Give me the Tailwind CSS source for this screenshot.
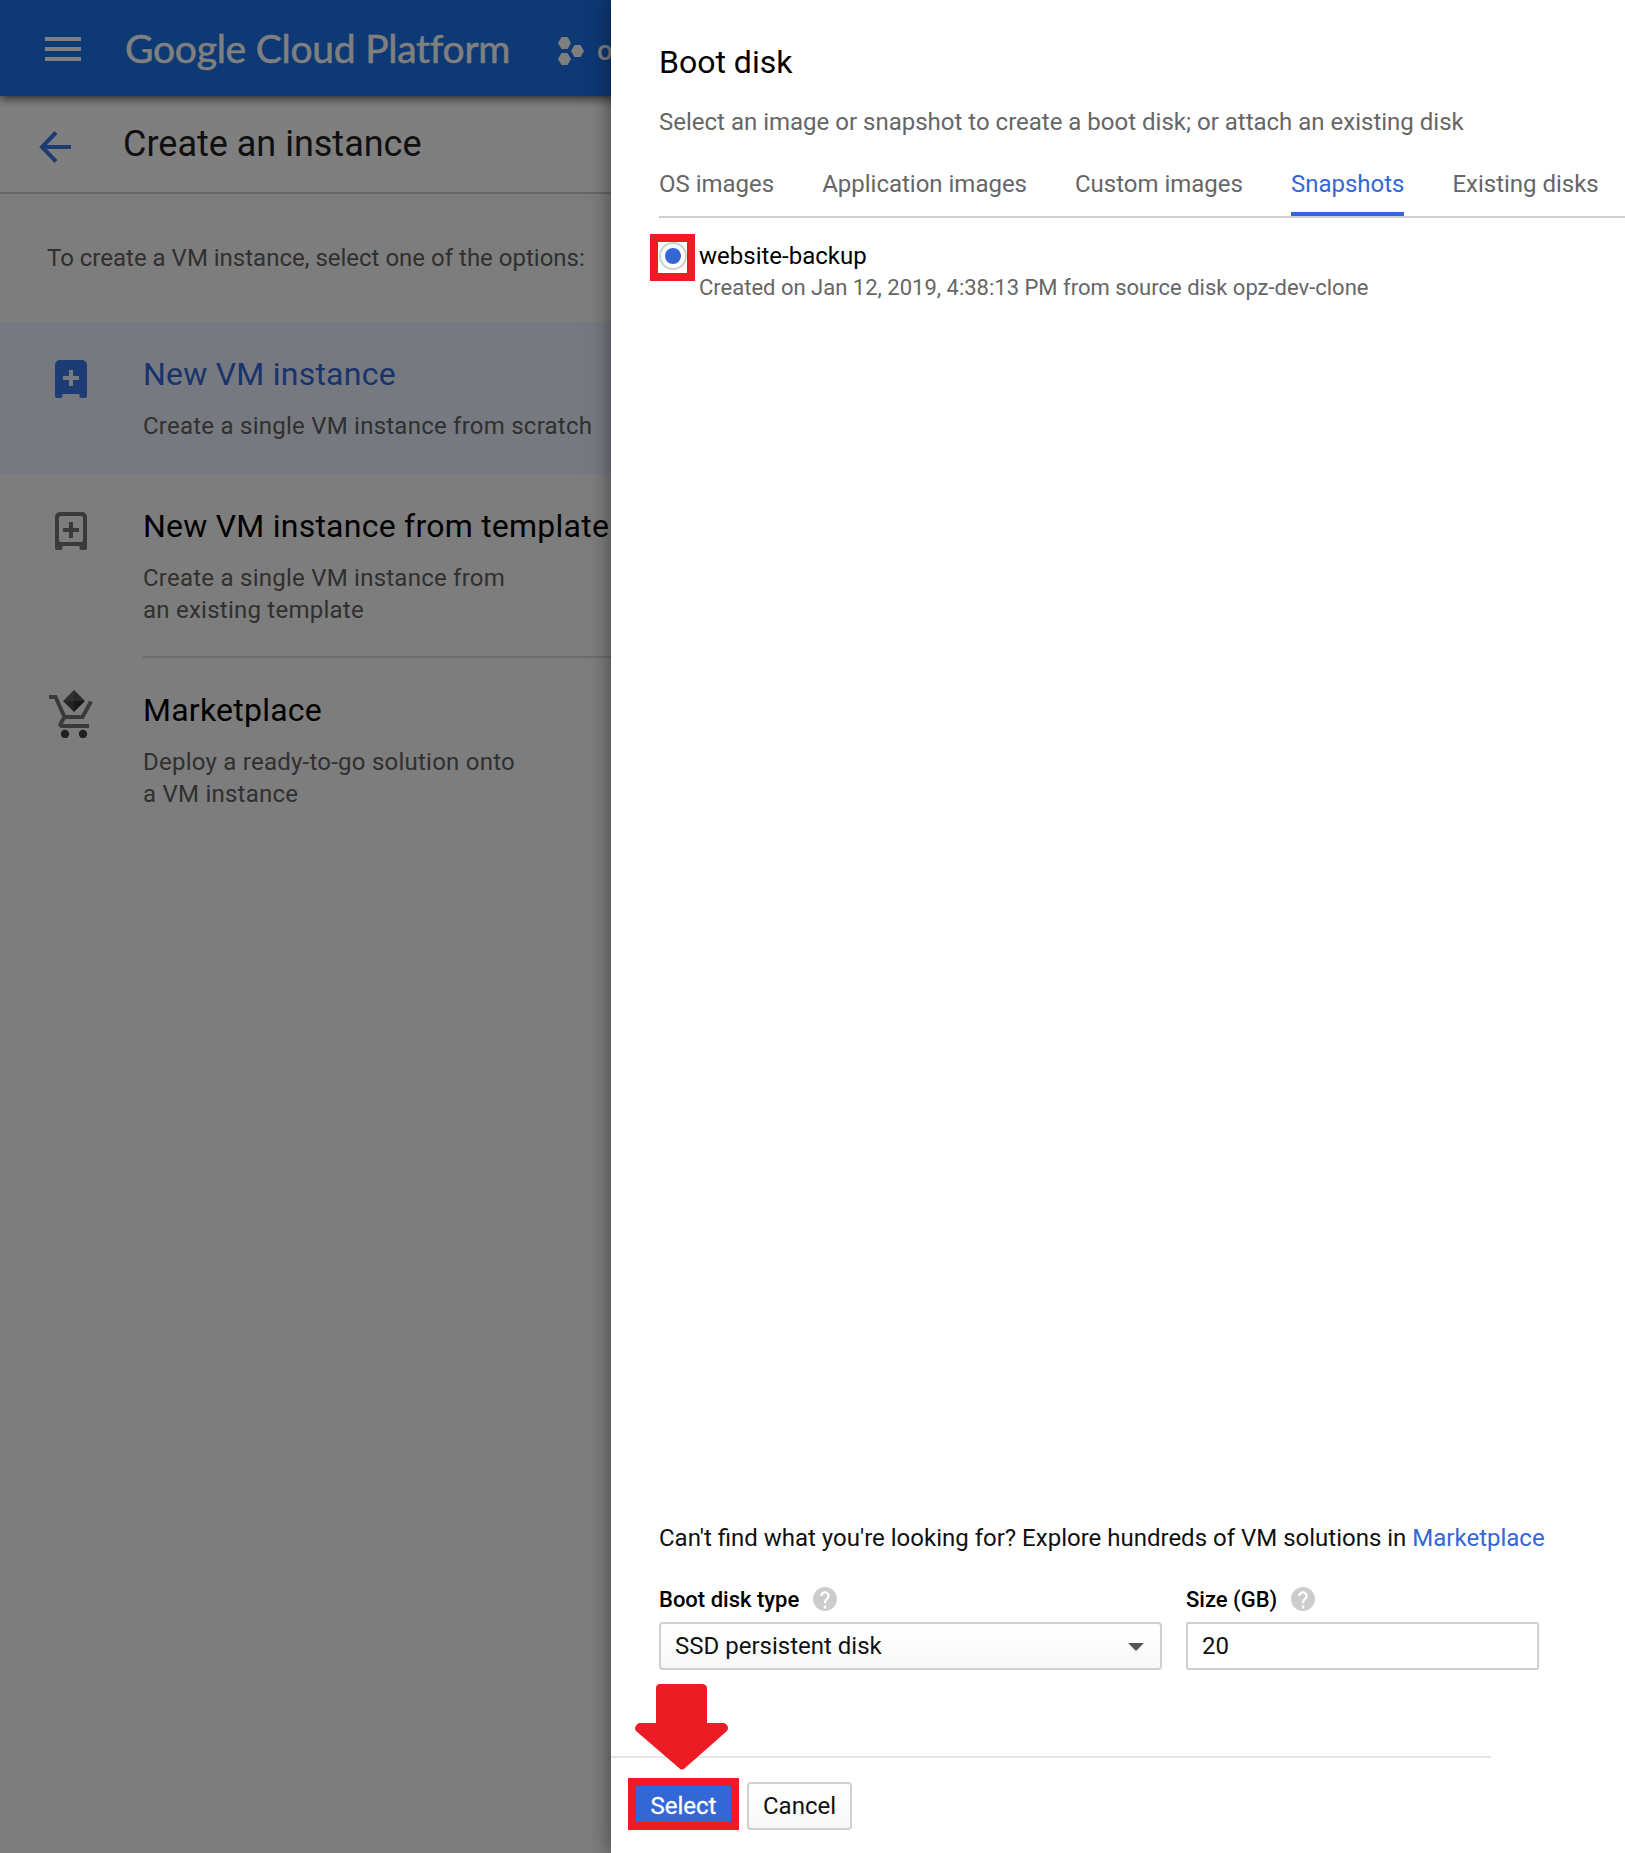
<!DOCTYPE html>
<html lang="en">
<head>
<meta charset="utf-8">
<title>Create an instance</title>
<script src="https://cdn.jsdelivr.net/npm/@tailwindcss/browser@4"></script>
</head>
<body class="relative h-[1853px] w-[1625px] overflow-hidden bg-[#fafafa] font-['Roboto',sans-serif] text-2xl/8 text-black">

<!-- Page behind the drawer -->
<div class="flex h-full w-[611px] flex-col overflow-hidden whitespace-nowrap">
  <header class="relative z-10 flex h-24 w-[1625px] shrink-0 items-center bg-[#1a73e8] text-white shadow-[0_2px_10px_rgba(0,0,0,0.75)]">
    <svg class="ml-[45px] mt-[2px] h-6 w-9 shrink-0" viewBox="0 0 36 24" fill="currentColor"><path d="M0 0h36v4H0zM0 10h36v4H0zM0 20h36v4H0z"/></svg>
    <span class="ml-[44px] w-[389px] font-['Lato',sans-serif] text-[39px]/[48px] tracking-[-0.25px] [-webkit-text-stroke:0.5px_white] [font-variant-ligatures:none]">Google Cloud Platform</span>
    <svg class="ml-[44px] mt-[6px] h-7 w-7 shrink-0" viewBox="0 0 28 28" fill="currentColor"><path d="M3.500 0h6l3.500 6-3.500 6h-6L0 6zM16.500 8h6l3.500 6-3.500 6h-6l-3.500-6zM3.500 16h6l3.500 6-3.500 6h-6L0 22z"/></svg>
    <span class="ml-[11px] mt-[5px] text-[28px]/[36px] font-medium">o</span>
  </header>

  <div class="flex h-[98px] shrink-0 items-start border-b-2 border-[#ccc] bg-white pt-6">
    <svg class="mt-[11px] ml-[39px] h-8 w-8" viewBox="0 0 32 32" fill="none" stroke="#3b78e7" stroke-width="4"><path d="M32 16H3M17 1.500L3 16l14 14.500"/></svg>
    <h1 class="ml-[52px] text-4xl/[48px] text-[#212121]">Create an instance</h1>
  </div>

  <p class="px-[47px] py-12 text-[#616161]">To create a VM instance, select one of the options:</p>

  <div class="flex bg-[#ecf3fe] py-8">
    <svg class="ml-[55px] mt-[6px] h-[38px] w-8 shrink-0" viewBox="0 0 32 38"><path fill="#3b78e7" fill-rule="evenodd" d="M5 0h22a5 5 0 0 1 5 5v31a2 2 0 0 1-2 2h-3.500a2 2 0 0 1-2-2v-2h-17v2a2 2 0 0 1-2 2H2a2 2 0 0 1-2-2V5a5 5 0 0 1 5-5zM14 10v6H8v4h6v6h4v-6h6v-4h-6v-6z"/></svg>
    <div class="ml-14 flex flex-col gap-4 tracking-[0.24px]">
      <h2 class="text-[32px]/10 text-[#3367d6]">New VM instance</h2>
      <p class="text-[#616161]">Create a single VM instance from scratch</p>
    </div>
  </div>

  <div class="flex">
    <svg class="ml-[55px] mt-[38px] h-[38px] w-8 shrink-0" viewBox="0 0 32 38"><path fill="#757575" fill-rule="evenodd" d="M5 0h22a5 5 0 0 1 5 5v31a2 2 0 0 1-2 2h-3.500a2 2 0 0 1-2-2v-2h-17v2a2 2 0 0 1-2 2H2a2 2 0 0 1-2-2V5a5 5 0 0 1 5-5zM6 4a2 2 0 0 0-2 2v22a2 2 0 0 0 2 2h20a2 2 0 0 0 2-2V6a2 2 0 0 0-2-2zM14 10h4v6h6v4h-6v6h-4v-6H8v-4h6z"/></svg>
    <div class="ml-14 flex grow flex-col gap-4 border-b-2 border-[#d8d8d8] pt-8 pb-[30px] tracking-[0.24px]">
      <h2 class="text-[32px]/10">New VM instance from template</h2>
      <p class="text-[#616161]">Create a single VM instance from<br>an existing template</p>
    </div>
  </div>

  <div class="flex py-8">
    <svg class="ml-[49px] h-12 w-11 shrink-0" viewBox="0 0 44 48"><path fill="none" stroke="#757575" stroke-width="4" d="M0 7h6.500l9 20M42 11.500L33.500 27h-18l-3.700 6.200c-1 1.800.2 2.800 1.700 2.800H40"/><circle cx="16" cy="44" r="4.200" fill="#424242"/><circle cx="34" cy="44" r="4.200" fill="#424242"/><path fill="#616161" d="M25 0L14 11h11z"/><path fill="#555" d="M25 0l11 11H25z"/><path fill="#484848" d="M14 11l11 11V11z"/><path fill="#303030" d="M36 11L25 22V11z"/></svg>
    <div class="ml-[50px] flex flex-col gap-4 tracking-[0.24px]">
      <h2 class="text-[32px]/10">Marketplace</h2>
      <p class="text-[#616161]">Deploy a ready-to-go solution onto<br>a VM instance</p>
    </div>
  </div>
</div>

<div class="absolute inset-0 z-20 bg-black/50"></div>

<!-- Boot disk drawer -->
<section class="absolute inset-y-0 right-0 z-30 flex w-[1014px] flex-col whitespace-nowrap bg-white shadow-[0_0_20px_rgba(0,0,0,0.5)]">
  <div class="flex grow flex-col pl-12 pt-[42px]">
    <h2 class="text-[32px]/10">Boot disk</h2>
    <p class="mt-6 text-[#666]">Select an image or snapshot to create a boot disk; or attach an existing disk</p>

    <nav class="mt-[30px] flex h-[50px] gap-12 border-b-2 border-[#d0d0d0] tracking-[-0.01px] text-[#666]">
      <span>OS images</span>
      <span>Application images</span>
      <span>Custom images</span>
      <span class="border-b-4 border-[#3367d6] text-[#3367d6]">Snapshots</span>
      <span>Existing disks</span>
    </nav>

    <div class="-ml-[9px] mt-4 flex items-start">
      <span class="flex h-[47px] w-[45px] justify-center border-8 border-[#ed1c24]">
        <span class="flex size-7 shrink-0 items-center justify-center rounded-full border-2 border-[#d0d0d0]"><span class="size-4 rounded-full bg-[#3367d6]"></span></span>
      </span>
      <div class="ml-[4px] mt-[6px]">
        <p>website-backup</p>
        <p class="text-[22px]/8 text-[#666]">Created on Jan 12, 2019, 4:38:13 PM from source disk opz-dev-clone</p>
      </div>
    </div>
  </div>

  <p class="pl-12 text-[#111]">Can't find what you're looking for? Explore hundreds of VM solutions in <a class="text-[#3367d6]">Marketplace</a></p>

  <div class="mt-[29px] flex gap-6 pl-12">
    <div class="w-[503px]">
      <div class="flex items-center text-[22px]/8 font-medium"><span class="mt-px">Boot disk type</span>
        <svg class="-mt-px ml-[14px] size-6" viewBox="2 2 20 20" fill="#ccc"><path d="M12 2C6.480 2 2 6.480 2 12s4.480 10 10 10 10-4.480 10-10S17.520 2 12 2zm1 18h-2v-2.500h2V20zm2.070-8.250l-.9.920C13.450 13.400 13 14 13 15.500h-2v-.5c0-1.100.45-2.100 1.170-2.830l1.240-1.260c.37-.36.590-.86.590-1.410 0-1.100-.9-2-2-2s-2 .9-2 2H8c0-2.210 1.790-4 4-4s4 1.790 4 4c0 .88-.36 1.680-.93 2.250z"/></svg>
      </div>
      <div class="mt-[6px] flex h-12 items-center justify-between rounded-[4px] border-2 border-[#d0d0d0] bg-linear-to-b from-white to-[#f8f8f8] pl-[14px] pr-4 text-[#111]">SSD persistent disk
        <svg class="mt-px h-[8px] w-4" viewBox="0 0 16 8" fill="#555"><path d="M0 0h16L8 8z"/></svg>
      </div>
    </div>
    <div class="w-[353px]">
      <div class="flex items-center text-[22px]/8 font-medium"><span class="mt-px">Size (GB)</span>
        <svg class="-mt-px ml-[14px] size-6" viewBox="2 2 20 20" fill="#ccc"><path d="M12 2C6.480 2 2 6.480 2 12s4.480 10 10 10 10-4.480 10-10S17.520 2 12 2zm1 18h-2v-2.500h2V20zm2.070-8.250l-.9.920C13.450 13.400 13 14 13 15.500h-2v-.5c0-1.100.45-2.100 1.170-2.830l1.240-1.260c.37-.36.590-.86.590-1.410 0-1.100-.9-2-2-2s-2 .9-2 2H8c0-2.210 1.790-4 4-4s4 1.790 4 4c0 .88-.36 1.680-.93 2.250z"/></svg>
      </div>
      <div class="mt-[6px] flex h-12 items-center rounded-[2px] border-2 border-[#d0d0d0] pl-[14px] text-[#111]">20</div>
    </div>
  </div>

  <div class="mt-[86px] h-[2px] w-[880px] bg-[#e6e6e6]"></div>
  <div class="flex h-[95px] items-start gap-2 pl-[17px] pt-5">
    <button class="h-[52px] w-[111px] border-8 border-[#ed1c24] bg-[#3367d6] pt-1 text-2xl/8 text-white [-webkit-text-stroke:0.3px_white]">Select</button>
    <button class="mt-1 h-12 w-[105px] rounded-[4px] border-2 border-[#d0d0d0] bg-linear-to-b from-white to-[#f8f8f8] text-[#111]">Cancel</button>
  </div>

  <!-- Callout arrow over the footer rule -->
  <svg class="absolute left-6 top-[1684px] h-[86px] w-[94px]" viewBox="0 0 94 86" fill="#ed1c24"><path d="M24 0h44q4 1 4 4v35h17q6 3 3 8L50 84q-3 3-6 0L1 47q-3-4 3-8h17V4q0-3 3-4z"/></svg>
</section>
</body>
</html>
